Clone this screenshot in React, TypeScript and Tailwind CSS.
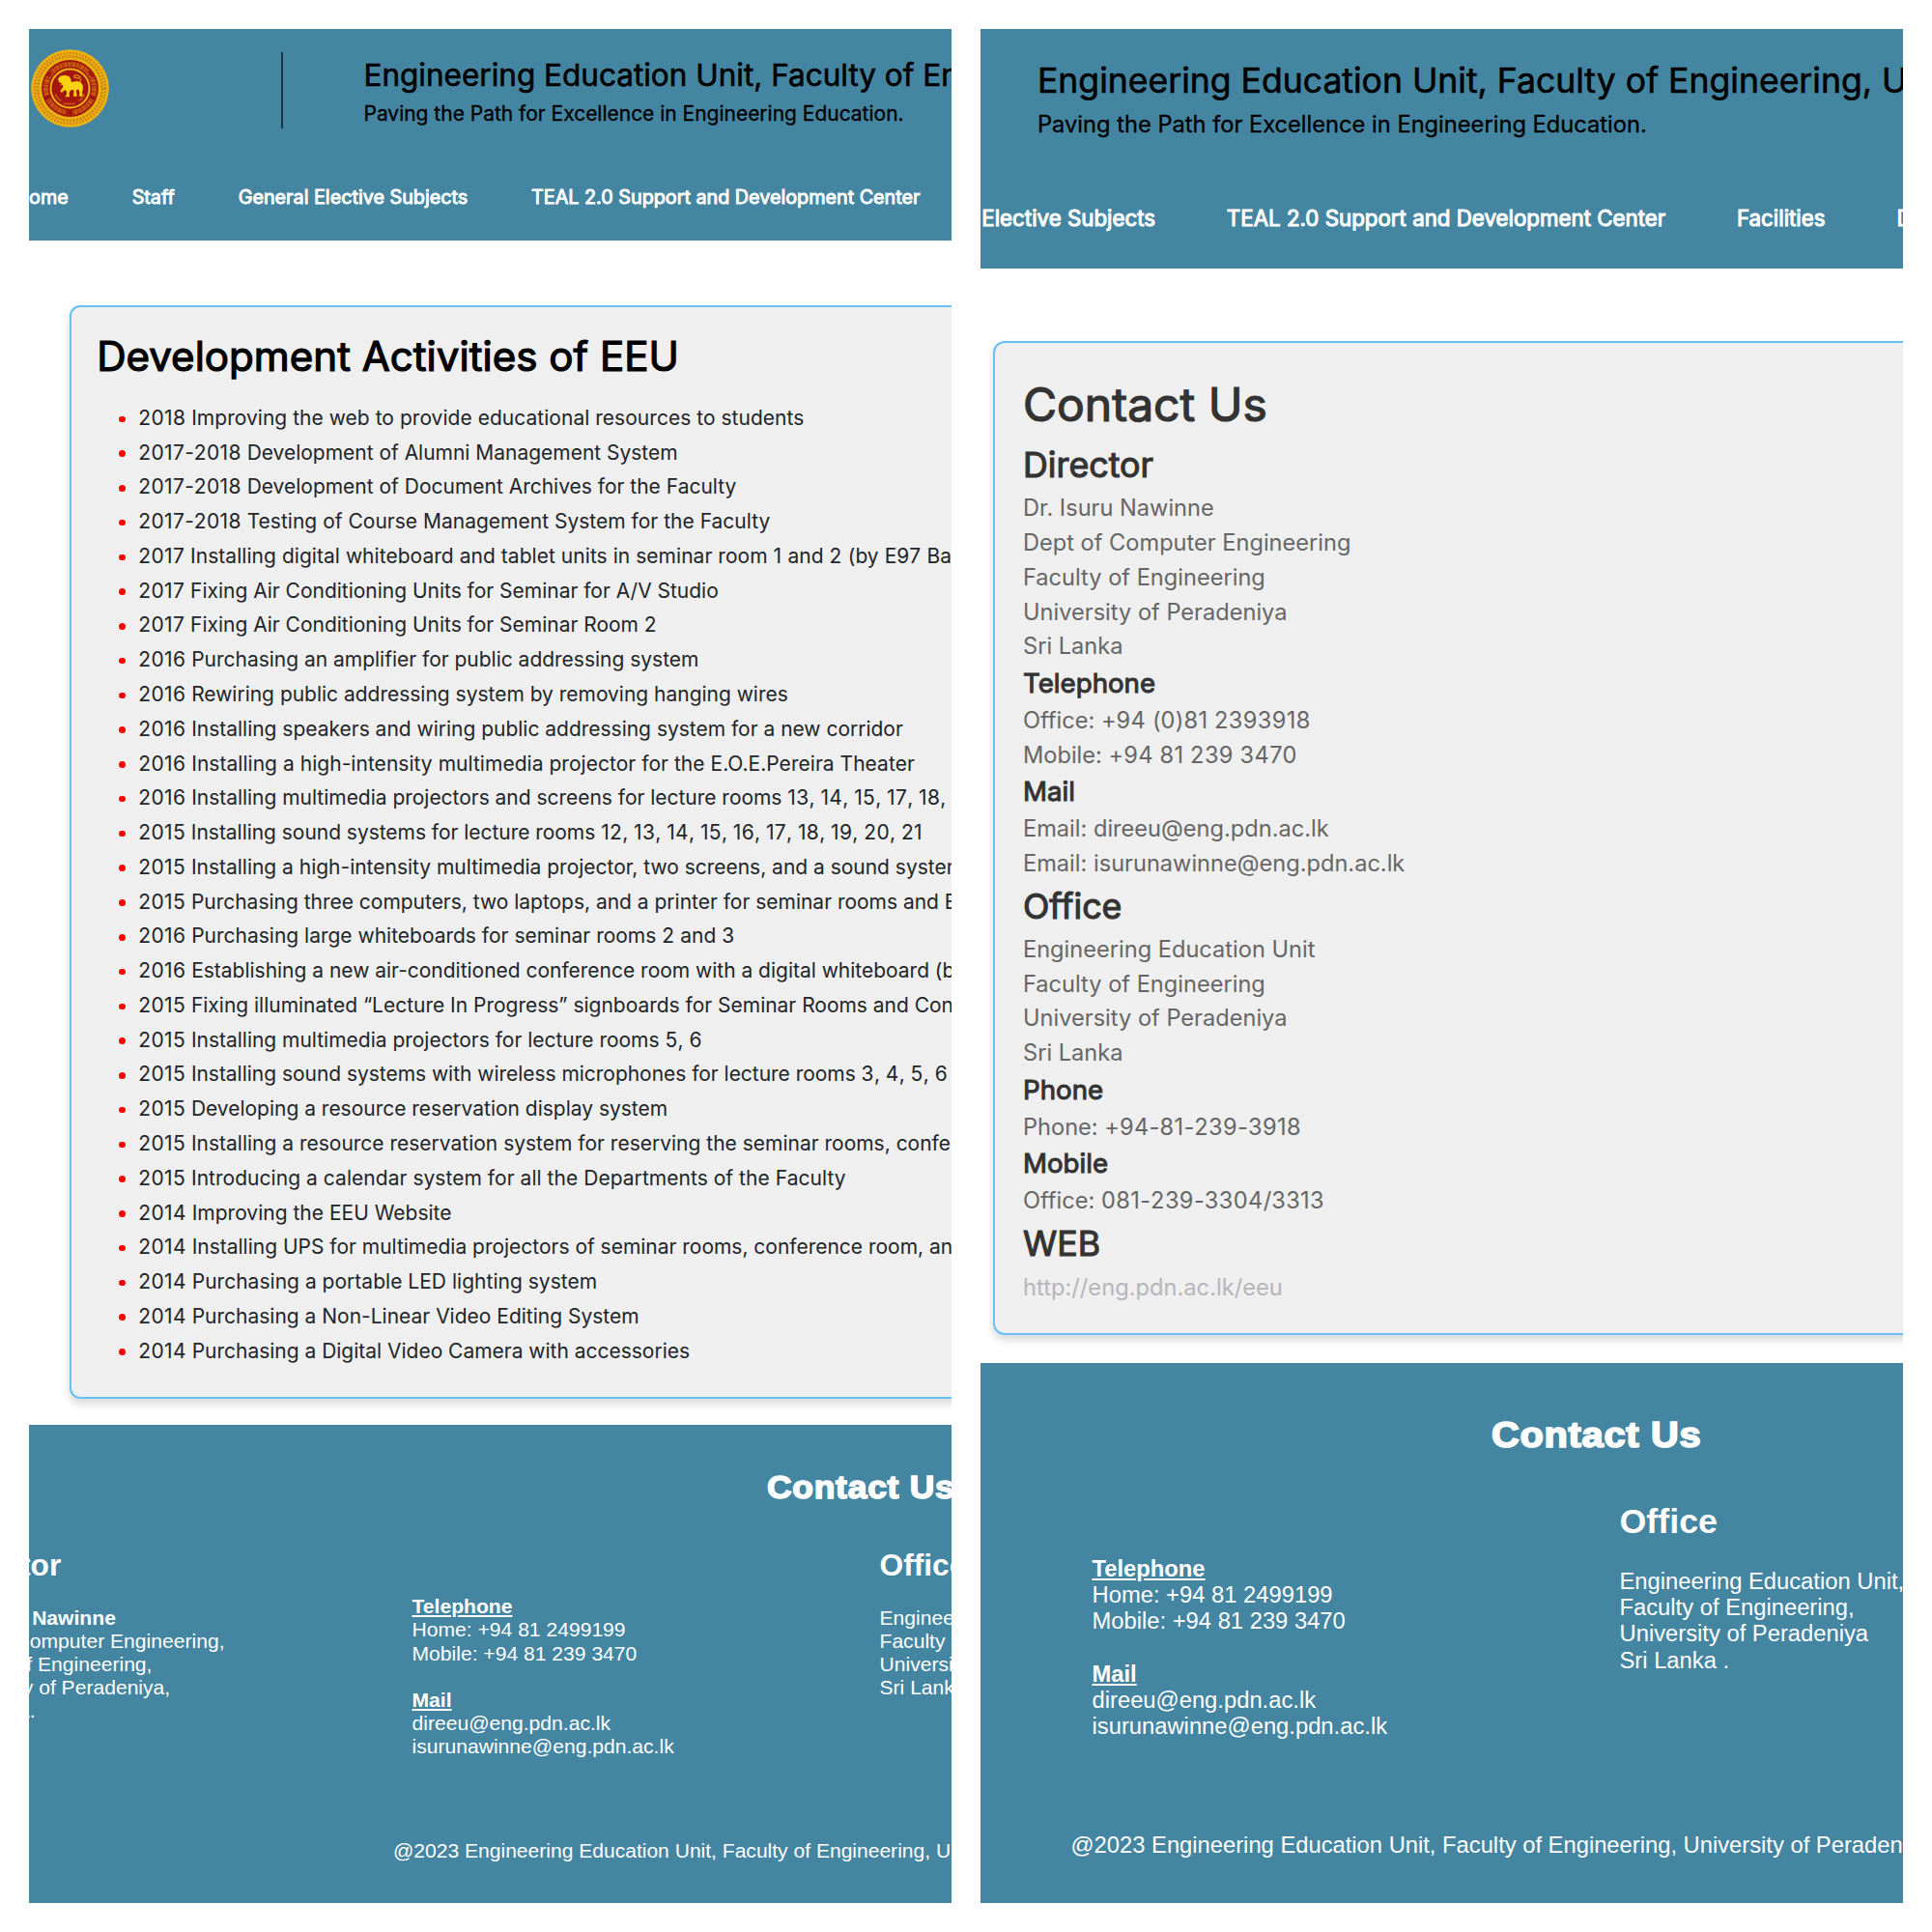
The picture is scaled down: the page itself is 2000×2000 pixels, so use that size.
import React from 'react';

// Each entry carries the extra width, in pixels, spread over the line's letters.
const activities: [string, number][] = [
  ['2018 Improving the web to provide educational resources to students', 3],
  ['2017-2018 Development of Alumni Management System', 0],
  ['2017-2018 Development of Document Archives for the Faculty', 0.5],
  ['2017-2018 Testing of Course Management System for the Faculty', 1.5],
  ['2017 Installing digital whiteboard and tablet units in seminar room 1 and 2 (by E97 Batch)', 5],
  ['2017 Fixing Air Conditioning Units for Seminar for A/V Studio', 0],
  ['2017 Fixing Air Conditioning Units for Seminar Room 2', 0],
  ['2016 Purchasing an amplifier for public addressing system', 0],
  ['2016 Rewiring public addressing system by removing hanging wires', 0],
  ['2016 Installing speakers and wiring public addressing system for a new corridor', 0],
  ['2016 Installing a high-intensity multimedia projector for the E.O.E.Pereira Theater', 4],
  ['2016 Installing multimedia projectors and screens for lecture rooms 13, 14, 15, 17, 18, 19', -1],
  ['2015 Installing sound systems for lecture rooms 12, 13, 14, 15, 16, 17, 18, 19, 20, 21', -2],
  ['2015 Installing a high-intensity multimedia projector, two screens, and a sound system', 0],
  ['2015 Purchasing three computers, two laptops, and a printer for seminar rooms and EEU', 0],
  ['2016 Purchasing large whiteboards for seminar rooms 2 and 3', 0.5],
  ['2016 Establishing a new air-conditioned conference room with a digital whiteboard (by', 0],
  ['2015 Fixing illuminated “Lecture In Progress” signboards for Seminar Rooms and Conference', 0],
  ['2015 Installing multimedia projectors for lecture rooms 5, 6', 0],
  ['2015 Installing sound systems with wireless microphones for lecture rooms 3, 4, 5, 6', -1.5],
  ['2015 Developing a resource reservation display system', 0],
  ['2015 Installing a resource reservation system for reserving the seminar rooms, conference', 1],
  ['2015 Introducing a calendar system for all the Departments of the Faculty', 4],
  ['2014 Improving the EEU Website', 0.5],
  ['2014 Installing UPS for multimedia projectors of seminar rooms, conference room, and', 0],
  ['2014 Purchasing a portable LED lighting system', 1.5],
  ['2014 Purchasing a Non-Linear Video Editing System', 0.5],
  ['2014 Purchasing a Digital Video Camera with accessories', 0],
];

type Line = { kind: 'h2' | 'h3' | 'p' | 'a'; text: string };

const contact: Line[] = [
  { kind: 'h2', text: 'Director' },
  { kind: 'p', text: 'Dr. Isuru Nawinne' },
  { kind: 'p', text: 'Dept of Computer Engineering' },
  { kind: 'p', text: 'Faculty of Engineering' },
  { kind: 'p', text: 'University of Peradeniya' },
  { kind: 'p', text: 'Sri Lanka' },
  { kind: 'h3', text: 'Telephone' },
  { kind: 'p', text: 'Office: +94 (0)81 2393918' },
  { kind: 'p', text: 'Mobile: +94 81 239 3470' },
  { kind: 'h3', text: 'Mail' },
  { kind: 'p', text: 'Email: direeu@eng.pdn.ac.lk' },
  { kind: 'p', text: 'Email: isurunawinne@eng.pdn.ac.lk' },
  { kind: 'h2', text: 'Office' },
  { kind: 'p', text: 'Engineering Education Unit' },
  { kind: 'p', text: 'Faculty of Engineering' },
  { kind: 'p', text: 'University of Peradeniya' },
  { kind: 'p', text: 'Sri Lanka' },
  { kind: 'h3', text: 'Phone' },
  { kind: 'p', text: 'Phone: +94-81-239-3918' },
  { kind: 'h3', text: 'Mobile' },
  { kind: 'p', text: 'Office: 081-239-3304/3313' },
  { kind: 'h2', text: 'WEB' },
  { kind: 'a', text: 'http://eng.pdn.ac.lk/eeu' },
];

const lineStyles: Record<Line['kind'], string> = {
  h2: 'text-[35.8px] leading-[53.5px] text-[#333] [-webkit-text-stroke:1.1px_#333]',
  h3: 'text-[27.7px] leading-[40.9px] text-[#333] [-webkit-text-stroke:1px_#333]',
  p: 'text-[23.6px] leading-[35.7px] text-[#666]',
  a: 'text-[23.7px] leading-[35.7px] text-[#b5b5ba]',
};

// Numbers are set slightly looser than the surrounding words.
function Spaced({ text, extra = 0 }: { text: string; extra?: number }) {
  return (
    <span className="whitespace-pre" style={extra ? { letterSpacing: `${extra / text.length}px` } : undefined}>
      {text.split(/(\d+)/).map((part, i) =>
        i % 2 ? (
          <span key={i} className="tracking-[0.017em]">
            {part}
          </span>
        ) : (
          part
        ),
      )}
    </span>
  );
}

function Crest() {
  return (
    <svg viewBox="0 0 81 81" className="h-[81px] w-[81px] shrink-0">
      <circle cx="40.5" cy="40.5" r="40.3" fill="#e9b212" />
      <circle cx="40.5" cy="40.5" r="36.5" fill="none" stroke="#c9700f" strokeWidth="2.4" strokeDasharray="1.3 2" />
      <circle cx="40.5" cy="40.5" r="33.2" fill="none" stroke="#cf850f" strokeWidth="2.4" strokeDasharray="2.4 1.2" />
      <circle cx="40.5" cy="40.5" r="29.4" fill="#a3170f" />
      <circle cx="40.5" cy="40.5" r="25" fill="none" stroke="#cf6a10" strokeWidth="5" strokeDasharray="2.2 0.7 1.3 0.6 2.8 0.9" strokeOpacity="0.85" pathLength="150" />
      <path d="M14.5 51 L20 48.5 M38.5 69 v-7 M41.5 69 v-7 M66.5 51 L61 48.5 M21 24 L17 28 M60 23 l4 5" stroke="#a3170f" strokeWidth="3.6" />
      <circle cx="40.5" cy="40.5" r="20" fill="#a3170f" stroke="#edb912" strokeWidth="1.9" />
      <path
        d="M28 30.5 l2.5 -2.8 4.5 -1 4.5 1.2 1.8 3.2 .6 3 5.8 -1 3.8 1 2.2 3.2 .3 4 -1 2.6 .6 4.8 h-3.4 l.2 -4.6 -1.5 -2.8 -2 1.2 .8 6.2 h-3.6 l.4 -6.4 -3 -.4 -2 3 .6 4.4 h-5 l1.8 -2 .2 -3.6 -2 -1.8 -3.2 3 -1.6 -1.6 2.8 -4 .2 -2.2 -3.4 .4 2.6 -2 -3.4 -1.2 z"
        fill="#fbd20f"
      />
      <path d="M50.5 34 c2.4 -2 .8 -4.6 -2.4 -4.2 c-3 0 -4.6 -1.8 -2.4 -2.8 c2.4 -.6 4 .4 6 2" fill="none" stroke="#d9890f" strokeWidth="1.3" />
      <path d="M25.5 47 c1.5 3 3 4.6 5.5 6.5 M55 47 c-1.5 3 -2.5 4.4 -5 6.5 M34.5 56.5 h11" fill="none" stroke="#cf6a10" strokeWidth="2" strokeDasharray="1.6 .8" />
    </svg>
  );
}

function LeftPage() {
  return (
    <section className="flex h-[1940px] w-[955px] flex-col overflow-hidden whitespace-nowrap bg-white">
      <header className="h-[219px] shrink-0 bg-[#4485a1] font-['Inter',sans-serif]">
        <div className="flex h-[123px] items-start">
          <div className="ml-[1.5px] mt-[21px]">
            <Crest />
          </div>
          <div className="ml-[178.5px] mt-6 h-[79px] w-[1.5px] shrink-0 bg-[#173540]" />
          <div className="ml-[84px] mt-[23.5px] text-black">
            <h1 className="text-[31.5px] leading-[48px] [-webkit-text-stroke:0.6px_#000]">
              Engineering Education Unit, Faculty of Engineering
            </h1>
            <p className="text-[20.97px] leading-[32px] [-webkit-text-stroke:0.3px_#000]">
              Paving the Path for Excellence in Engineering Education.
            </p>
          </div>
        </div>
        <nav className="mt-9 flex w-[922.5px] justify-end gap-[65.9px] text-[19.76px] leading-[30px] text-white [-webkit-text-stroke:0.9px_#fff]">
          <span>Home</span>
          <span>Staff</span>
          <span>General Elective Subjects</span>
          <span>TEAL 2.0 Support and Development Center</span>
        </nav>
      </header>

      <main className="ml-[42px] mt-[67px] h-[1132px] w-[1000px] shrink-0 rounded-[11px] border-2 border-[#66c1f6] bg-[#efefef] pl-[26.2px] pt-[19px] font-['Inter',sans-serif] shadow-[0_5px_10px_rgba(0,0,0,0.16)]">
        <h2 className="text-[42.1px] leading-[64px] text-black [-webkit-text-stroke:1.2px_#000]">
          Development Activities of EEU
        </h2>
        <ul className="mt-[13.9px] text-[20.97px] leading-[35.76px] text-[#212529]">
          {activities.map(([item, extra]) => (
            <li key={item} className="flex items-center">
              <span className="ml-[23.3px] mr-[13.3px] mt-[2px] h-[6.5px] w-[6.5px] shrink-0 rounded-full bg-[#f00]" />
              <Spaced text={item} extra={extra} />
            </li>
          ))}
        </ul>
      </main>

      <footer className="mt-[26.5px] min-h-0 flex-1 bg-[#4485a1] font-['Liberation_Sans',Arial,sans-serif] text-[21.1px] leading-[24.17px] text-white">
        <div className="ml-[763.5px] pt-[43.5px]">
          <h2 className="origin-left scale-x-[1.08] text-[32.8px] font-bold leading-[44px] tracking-[0.7px] [-webkit-text-stroke:1.5px_#fff]">
            Contact Us
          </h2>
        </div>
        <div className="mt-9 flex h-[250px] items-start">
          <div className="flex w-[202.5px] shrink-0 justify-end">
            <div>
              <h3 className="text-[31.7px] font-bold leading-[44px]">Director</h3>
              <p className="mt-[20.5px] font-bold">Dr. Isuru Nawinne</p>
              <p>Dept of Computer Engineering,</p>
              <p>Faculty of Engineering,</p>
              <p>University of Peradeniya,</p>
              <p>Sri Lanka.</p>
            </div>
          </div>
          <div className="ml-[194px] mt-[53.3px] w-[484px] shrink-0">
            <p className="font-bold underline">Telephone</p>
            <p>Home: +94 81 2499199</p>
            <p>Mobile: +94 81 239 3470</p>
            <p className="mt-[24.17px] font-bold underline">Mail</p>
            <p>direeu@eng.pdn.ac.lk</p>
            <p>isurunawinne@eng.pdn.ac.lk</p>
          </div>
          <div className="min-w-0 flex-1">
            <h3 className="text-[31.7px] font-bold leading-[44px]">Office</h3>
            <p className="mt-[20.5px]">Engineering Education Unit,</p>
            <p>Faculty of Engineering,</p>
            <p>University of Peradeniya</p>
            <p>Sri Lanka .</p>
          </div>
        </div>
        <p className="ml-[377px] mt-[56px] text-[21.05px] leading-[24px]">
          @2023 Engineering Education Unit, Faculty of Engineering, University of Peradeniya
        </p>
      </footer>
    </section>
  );
}

function RightPage() {
  return (
    <section className="flex h-[1940px] w-[955px] flex-col overflow-hidden whitespace-nowrap bg-white">
      <header className="h-[248px] shrink-0 bg-[#4485a1] font-['Inter',sans-serif]">
        <div className="ml-[59px] pt-[27px] text-black">
          <h1 className="text-[35.55px] leading-[54px] [-webkit-text-stroke:0.6px_#000]">
            Engineering Education Unit, Faculty of Engineering, University
          </h1>
          <p className="text-[23.67px] leading-[35px] [-webkit-text-stroke:0.3px_#000]">
            Paving the Path for Excellence in Engineering Education.
          </p>
        </div>
        <nav className="mt-[63px] flex text-[22.3px] leading-[34px] text-white [-webkit-text-stroke:1px_#fff]">
          <div className="flex w-[874.5px] shrink-0 justify-end gap-[73.8px]">
            <span>General Elective Subjects</span>
            <span>TEAL 2.0 Support and Development Center</span>
            <span>Facilities</span>
          </div>
          <span className="ml-[74px]">Development</span>
        </nav>
      </header>

      <main className="ml-[13px] mt-[75px] h-[1029px] w-[1000px] shrink-0 rounded-[12px] border-2 border-[#66c1f6] bg-[#efefef] pl-[29px] pt-[28.2px] font-['Inter',sans-serif] shadow-[0_5px_10px_rgba(0,0,0,0.16)]">
        <h1 className="text-[48px] leading-[71.7px] text-[#333] [-webkit-text-stroke:1.2px_#333]">Contact Us</h1>
        {contact.map((line, i) => (
          <p key={i} className={lineStyles[line.kind]}>
            <Spaced text={line.text} />
          </p>
        ))}
      </main>

      <footer className="mt-[29px] min-h-0 flex-1 bg-[#4485a1] font-['Liberation_Sans',Arial,sans-serif] text-[23.78px] leading-[27.23px] text-white">
        <div className="ml-[529px] pt-[50.5px]">
          <h2 className="origin-left scale-x-[1.075] text-[37px] font-bold leading-[48px] tracking-[0.7px] [-webkit-text-stroke:1.7px_#fff]">
            Contact Us
          </h2>
        </div>
        <div className="mt-[41.5px] flex h-[280px] items-start">
          <div className="ml-[115.5px] mt-[59px] w-[546px] shrink-0">
            <p className="font-bold underline">Telephone</p>
            <p>Home: +94 81 2499199</p>
            <p>Mobile: +94 81 239 3470</p>
            <p className="mt-[27.23px] font-bold underline">Mail</p>
            <p>direeu@eng.pdn.ac.lk</p>
            <p>isurunawinne@eng.pdn.ac.lk</p>
          </div>
          <div>
            <h3 className="text-[35.8px] font-bold leading-[48px]">Office</h3>
            <p className="mt-[24px]">Engineering Education Unit,</p>
            <p>Faculty of Engineering,</p>
            <p>University of Peradeniya</p>
            <p>Sri Lanka .</p>
          </div>
        </div>
        <p className="ml-[93.5px] mt-[65px] text-[23.76px] leading-[27px]">
          @2023 Engineering Education Unit, Faculty of Engineering, University of Peradeniya
        </p>
      </footer>
    </section>
  );
}

export default function App() {
  return (
    <div className="flex h-[2000px] w-[2000px] gap-[30px] overflow-hidden bg-white p-[30px]">
      <LeftPage />
      <RightPage />
    </div>
  );
}
